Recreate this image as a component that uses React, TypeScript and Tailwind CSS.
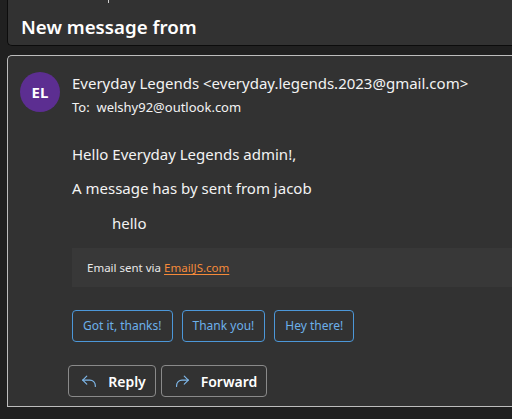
import React from "react"

const quickReplies = ["Got it, thanks!", "Thank you!", "Hey there!"]

function ReplyIcon() {
  return (
    <svg width="18" height="18" viewBox="0 0 20 20" fill="none" stroke="currentColor" strokeWidth="1.3" strokeLinecap="round" strokeLinejoin="round">
      <path d="M7.5 4.5 3 9l4.5 4.5" />
      <path d="M3 9h8a6 6 0 0 1 6 6v1" />
    </svg>
  )
}

function ForwardIcon() {
  return (
    <svg width="18" height="18" viewBox="0 0 20 20" fill="none" stroke="currentColor" strokeWidth="1.3" strokeLinecap="round" strokeLinejoin="round">
      <path d="M12.5 4.5 17 9l-4.5 4.5" />
      <path d="M17 9H10a6 6 0 0 0-6 6v1" />
    </svg>
  )
}

export default function App() {
  return (
    <div className="relative w-[512px] h-[419px] overflow-hidden bg-[#202020] font-['Noto_Sans','Liberation_Sans',sans-serif] text-[#f3f3f3]">
      <div className="absolute left-[108px] top-0 w-px h-[3px] bg-[#d0d0d0]" />

      <div className="ml-[7px] mr-[-10px] h-[46px] bg-[#323232] border-l border-b border-[#0c0c0c] rounded-bl-[5px] pl-[13px] pt-[13px]">
        <h1 className="text-[18.7px] leading-[28px] font-semibold text-white">New message from</h1>
      </div>

      <div className="mt-[9px] ml-[7px] mr-[-10px] h-[352px] bg-[#323232] border border-[#bdbdbd] border-r-0 rounded-tl-[5px] pl-[12px] pt-[16px]">
        <div className="flex gap-3">
          <div className="w-10 h-10 rounded-full bg-[#5c2e91] flex items-center justify-center text-[15px] font-bold text-white">
            EL
          </div>
          <div className="pt-[1px]">
            <div className="text-[15px] leading-[20px] text-[#f3f3f3] whitespace-nowrap">
              Everyday Legends &lt;everyday.legends.2023@gmail.com&gt;
            </div>
            <div className="mt-[5px] text-[13px] leading-[18px] text-[#f3f3f3] whitespace-nowrap">
              To:&nbsp; welshy92@outlook.com
            </div>
          </div>
        </div>

        <div className="pl-[52px] mt-[28px]">
          <p className="text-[15px] leading-[20px]">Hello Everyday Legends admin!,</p>
          <p className="mt-[14px] text-[15px] leading-[20px]">A message has by sent from jacob</p>
          <p className="mt-[15px] pl-[40px] text-[15px] leading-[20px]">hello</p>

          <div className="mt-[15px] h-[39px] bg-[#383838] pl-[15px] flex items-center">
            <span className="text-[11.5px] text-[#e8e8e8]">
              Email sent via{" "}
              <a href="#" className="text-[#f58a3a] underline underline-offset-2">EmailJS.com</a>
            </span>
          </div>

          <div className="mt-[23px] flex gap-[9px]">
            {quickReplies.map((label) => (
              <button
                key={label}
                className="h-[32px] px-[10px] rounded-[4px] border border-[#4c97d8] text-[12px] text-[#6cb0ea]"
              >
                {label}
              </button>
            ))}
          </div>
        </div>

        <div className="pl-[48px] mt-[23px] flex gap-[5px]">
          <button className="h-[32px] w-[88px] rounded-[4px] border border-[#8a8a8a] flex items-center justify-center gap-[10px] pl-[2px] text-[14px] font-semibold text-white">
            <span className="text-[#7fb8ea]"><ReplyIcon /></span>
            Reply
          </button>
          <button className="h-[32px] w-[106px] rounded-[4px] border border-[#8a8a8a] flex items-center justify-center gap-[10px] pl-[2px] text-[14px] font-semibold text-white">
            <span className="text-[#7fb8ea]"><ForwardIcon /></span>
            Forward
          </button>
        </div>
      </div>
    </div>
  )
}
